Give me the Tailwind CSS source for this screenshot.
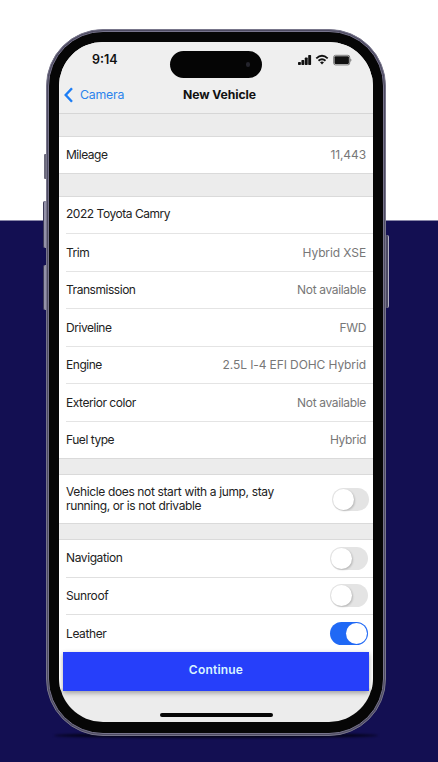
<!DOCTYPE html>
<html lang="en">
<head>
<meta charset="utf-8">
<title>New Vehicle</title>
<script src="https://cdn.jsdelivr.net/npm/@tailwindcss/browser@4"></script>
</head>
<body class="w-[438px] h-[762px] overflow-hidden bg-[linear-gradient(#ffffff_220px,#130f52_221px)] pt-[29px] pl-[46px] font-['Inter',sans-serif] text-[12px] text-[#222]">
<div class="relative w-[340px] h-[707px]">
  <!-- ground shadow -->
  <div class="absolute left-[8px] right-[8px] bottom-[-2px] h-[5px] rounded-[50%] bg-[#05041c] blur-[1px]"></div>
  <!-- side buttons -->
  <div class="absolute left-[-2px] top-[125px] w-[3px] h-[25px] rounded-l-[1px] bg-[#6c6a7c]"></div>
  <div class="absolute left-[-3px] top-[172px] w-[4px] h-[47px] rounded-l-[2px] border-l border-[#3b3956] bg-[#9391a8]"></div>
  <div class="absolute left-[-3px] top-[236px] w-[4px] h-[45px] rounded-l-[2px] border-l border-[#3b3956] bg-[#9391a8]"></div>
  <div class="absolute right-[-3px] top-[206px] w-[4px] h-[73px] rounded-r-[2px] border-r border-[#b3b2c3] bg-[#4b4963]"></div>
  <!-- frame -->
  <div class="relative w-full h-full rounded-[57px] bg-[#4e4b62] border border-[#77758a] p-[1px]">
    <div class="h-full rounded-[55px] bg-[#060606] border border-[#77748c] pt-[10px] pb-[11px] px-[10px]">
      <main class="flex h-full flex-col overflow-hidden rounded-[44px] bg-[#ececec]">
        <header class="flex h-[72px] shrink-0 flex-col border-b border-[#d6d6d6] bg-[#efefef]">
          <div class="flex h-[35px] items-center">
            <span class="ml-[33px] mt-[2px] w-[78px] text-[12.5px] font-semibold text-[#111]">9:14</span>
            <div class="mt-[10px] flex h-[27px] w-[92px] items-center justify-end rounded-full bg-[#050505] pr-[12px]"><span class="h-[5px] w-[4px] rounded-full bg-[#24242c]"></span></div>
            <svg class="ml-[36px] w-[54px] h-[12px]" viewBox="0 0 54 12" fill="#111">
              <rect x="0" y="8" width="2.900" height="3" rx=".7"/><rect x="3.400" y="6" width="2.900" height="5" rx=".7"/><rect x="6.800" y="3.600" width="2.900" height="7.400" rx=".7"/><rect x="10.200" y="1" width="2.900" height="10" rx=".7"/>
              <g fill="none" stroke="#111" stroke-width="1.900"><path d="M18.300 4.400Q24 -.800 29.700 4.400"/><path d="M20.500 6.800Q24 3.700 27.500 6.800"/></g><path d="M22 8.300Q24 6.900 26 8.300L24 10.600Z"/>
              <rect x="35.700" y="1.300" width="16" height="9.600" rx="1.800" fill="none" stroke="#777" stroke-width="1"/><rect x="36.500" y="2.200" width="14.400" height="7.800" rx="1"/><path d="M52.500 4.300q1.600 1.800 0 3.600z" fill="#444"/>
            </svg>
          </div>
          <nav class="grid flex-1 grid-cols-[100px_1fr_100px] items-center">
            <a class="flex items-center gap-[7px] pl-[5px] text-[12.3px] tracking-[-.2px] text-[#2b83ec]"><svg class="w-[9px] h-[16px]" viewBox="0 0 9 16" fill="none" stroke="#1c7df5" stroke-width="2.400"><path d="M8 1.200L1.700 8L8 14.800"/></svg>Camera</a>
            <h1 class="pl-[7px] text-center text-[12.2px] font-bold tracking-[-.1px] text-[#111]">New Vehicle</h1>
          </nav>
        </header>
        <section class="mt-[22px] flex h-[38px] shrink-0 items-center justify-between border-y border-[#dadada] bg-white px-[7px]"><span class="tracking-[-.48px]">Mileage</span><span class="tracking-[-.1px] text-[#777]">11,443</span></section>
        <section class="mt-[22px] h-[263px] shrink-0 border-y border-[#dadada] bg-white pl-[7px] tracking-[-.46px]">
          <div class="flex h-[37px] items-center border-b border-[#e4e4e4] pb-[2px]">2022 Toyota Camry</div>
          <div class="flex h-[37.500px] items-center justify-between border-b border-[#e4e4e4] pr-[7px] pt-[1px]"><span>Trim</span><span class="tracking-[-.1px] text-[#777]">Hybrid XSE</span></div>
          <div class="flex h-[37.500px] items-center justify-between border-b border-[#e4e4e4] pr-[7px] pt-[1px]"><span>Transmission</span><span class="tracking-[-.34px] text-[#777]">Not available</span></div>
          <div class="flex h-[37.500px] items-center justify-between border-b border-[#e4e4e4] pr-[7px] pt-[1px]"><span>Driveline</span><span class="tracking-[-.34px] text-[#777]">FWD</span></div>
          <div class="flex h-[37.500px] items-center justify-between border-b border-[#e4e4e4] pr-[7px] pt-[1px]"><span>Engine</span><span class="tracking-[-.1px] text-[#777]">2.5L I-4 EFI DOHC Hybrid</span></div>
          <div class="flex h-[37.500px] items-center justify-between border-b border-[#e4e4e4] pr-[7px] pt-[1px]"><span>Exterior color</span><span class="tracking-[-.34px] text-[#777]">Not available</span></div>
          <div class="flex h-[37.500px] items-center justify-between pr-[7px]"><span>Fuel type</span><span class="tracking-[-.34px] text-[#777]">Hybrid</span></div>
        </section>
        <section class="mt-[15px] flex h-[50px] shrink-0 items-center justify-between border-y border-[#dadada] bg-white pl-[7px] pr-[4px]"><p class="leading-[14px] tracking-[-.36px]">Vehicle does not start with a jump, stay<br>running, or is not drivable</p>
          <span class="flex h-[23px] w-[37px] items-center rounded-full bg-[#e4e4e4] p-[1px]"><i class="h-[21px] w-[21px] rounded-full bg-white shadow-[1px_1px_2px_#0003]"></i></span></section>
        <section class="mt-[15px] h-[113px] shrink-0 border-t border-[#dadada] bg-white pl-[7px] tracking-[-.4px]">
          <div class="flex h-[37.500px] items-center justify-between border-b border-[#e0e0e0] pr-[5px]">Navigation<span class="flex h-[23px] w-[38px] items-center rounded-full bg-[#e4e4e4] p-[1px]"><i class="h-[21px] w-[21px] rounded-full bg-white shadow-[1px_1px_2px_#0003]"></i></span></div>
          <div class="flex h-[37.500px] items-center justify-between border-b border-[#e0e0e0] pr-[5px]">Sunroof<span class="flex h-[23px] w-[38px] items-center rounded-full bg-[#e4e4e4] p-[1px]"><i class="h-[21px] w-[21px] rounded-full bg-white shadow-[1px_1px_2px_#0003]"></i></span></div>
          <div class="flex h-[37.500px] items-center justify-between pr-[5px]">Leather<span class="flex h-[23px] w-[38px] items-center justify-end rounded-full bg-[#2069f5] p-[1px]"><i class="h-[21px] w-[21px] rounded-full bg-white"></i></span></div>
        </section>
        <div class="shrink-0 bg-[linear-gradient(#fff_36px,#ececec_37px)] px-[4px]"><button class="block h-[39px] w-full bg-[#263ffa] pb-[3px] text-[12px] font-semibold tracking-[.2px] text-[#d9f4ff] shadow-[0_2px_5px_#0005]">Continue</button></div>
        <div class="mx-auto mt-[22px] h-[4px] w-[113px] shrink-0 rounded-full bg-[#050505]"></div>
      </main>
    </div>
  </div>
</div>
</body>
</html>
